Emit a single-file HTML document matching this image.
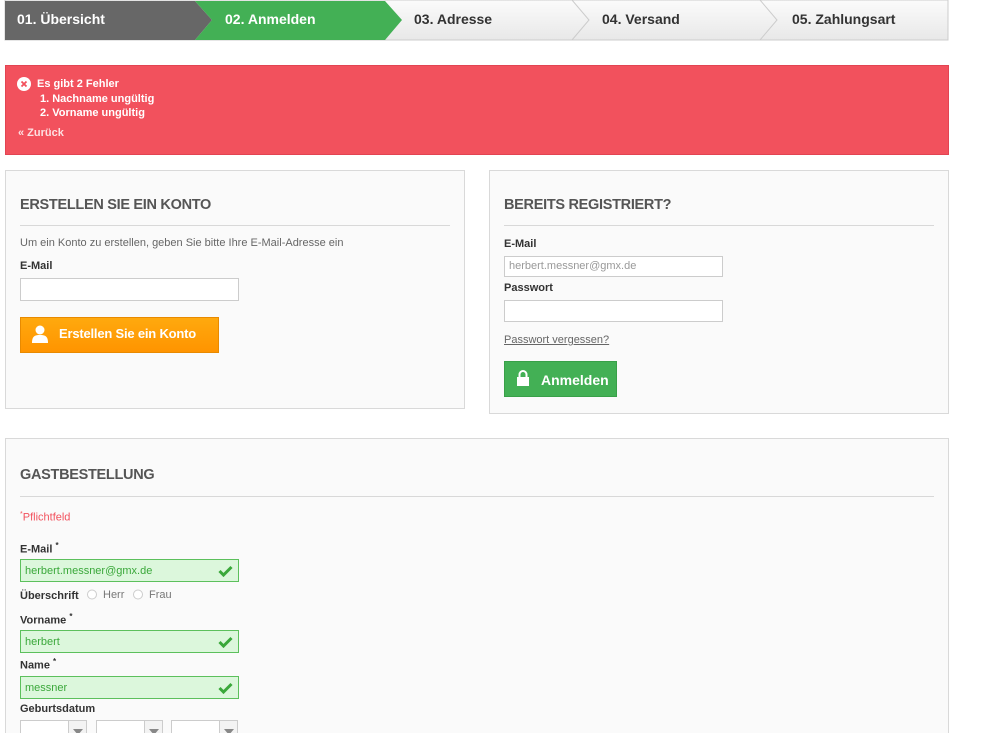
<!DOCTYPE html><html><head><meta charset="utf-8"><style>
*{box-sizing:border-box;margin:0;padding:0}
html,body{width:1000px;height:733px;overflow:hidden}
body{background:#fff;font-family:"Liberation Sans",Arial,sans-serif;font-size:12px;color:#333;position:relative}
.a{position:absolute}
.step{position:absolute;top:0;height:40px;font-weight:bold;font-size:14px;line-height:38px;padding-left:17px}
.box{position:absolute;background:#fafafa;border:1px solid #d9d9d9}
h3{position:absolute;font-size:14.5px;font-weight:bold;color:#555;letter-spacing:-.3px}
.hr{position:absolute;height:1px;background:#d8d8d8}
.lab{position:absolute;font-weight:bold;font-size:11px;color:#333}
.inp{position:absolute;height:23px;background:#fff;border:1px solid #ccc;font-size:11px;color:#999;padding:4px 4px;line-height:13px}
.ok{position:absolute;height:23px;width:219px;background:#dcf7dc;border:1px solid #5cc05c;font-size:11px;color:#3aa83a;padding:5px 4px;line-height:12px}
.ok svg{position:absolute;right:5px;top:5px}
.sel{position:absolute;top:720px;width:67px;height:20px;background:#fff;border:1px solid #ccc}
.sel i{position:absolute;right:0;top:0;width:18px;height:20px;border-left:1px solid #ccc;background:#f3f3f3}
.sel i:after{content:"";position:absolute;left:4px;top:8px;border:5px solid transparent;border-top:6px solid #888}
</style></head><body>
<svg class="a" style="left:0;top:0" width="1000" height="42">
<defs><linearGradient id="g" x1="0" y1="0" x2="0" y2="1"><stop offset="0" stop-color="#fbfbfb"/><stop offset="1" stop-color="#e8e8e8"/></linearGradient></defs>
<polygon points="5,0 948,0 948,40 5,40" fill="url(#g)" stroke="#ccc"/>
<polygon points="5,1 195,1 212,20 195,40 5,40" fill="#676767"/>
<polygon points="195,1 385,1 402,20 385,40 195,40 212,20" fill="#43b055"/>
<polyline points="572,0 589,20 572,40" fill="none" stroke="#ccc"/>
<polyline points="760,0 777,20 760,40" fill="none" stroke="#ccc"/>
</svg>
<div class="step" style="left:0;color:#fff">01. Übersicht</div>
<div class="step" style="left:208px;color:#fff">02. Anmelden</div>
<div class="step" style="left:397px;color:#333">03. Adresse</div>
<div class="step" style="left:585px;color:#333">04. Versand</div>
<div class="step" style="left:775px;color:#333">05. Zahlungsart</div>

<div class="a" style="left:5px;top:65px;width:944px;height:90px;background:#f2515d;border:1px solid #e24452"></div>
<svg class="a" style="left:17px;top:77px" width="14" height="14"><circle cx="7" cy="7" r="7" fill="#fff"/><path d="M4.5 4.5l5 5M9.5 4.5l-5 5" stroke="#f2515d" stroke-width="1.8"/></svg>
<div class="a" style="left:37px;top:77px;color:#fff;font-weight:bold;font-size:11px;line-height:14.5px">Es gibt 2 Fehler<br><span style="padding-left:3px">1. Nachname ungültig</span><br><span style="padding-left:3px">2. Vorname ungültig</span></div>
<div class="a" style="left:18px;top:127px;font-weight:bold;font-size:11px;color:#fde0e2">« Zurück</div>

<div class="box" style="left:5px;top:170px;width:460px;height:239px"></div>
<h3 style="left:20px;top:197px">ERSTELLEN SIE EIN KONTO</h3>
<div class="hr" style="left:20px;top:225px;width:430px"></div>
<div class="a" style="left:20px;top:237px;font-size:11px;color:#666">Um ein Konto zu erstellen, geben Sie bitte Ihre E-Mail-Adresse ein</div>
<div class="lab" style="left:20px;top:260px">E-Mail</div>
<div class="inp" style="left:20px;top:278px;width:219px"></div>
<div class="a" style="left:20px;top:317px;width:199px;height:36px;background:linear-gradient(#ffa90e,#ff9400);border:1px solid #e88a00"></div>
<svg class="a" style="left:31px;top:324px" width="18" height="20"><circle cx="9" cy="6" r="4.5" fill="#fff"/><path d="M1 19c0-7 3-8 8-8s8 1 8 8z" fill="#fff"/></svg>
<div class="a" style="left:59px;top:326px;color:#fff;font-weight:bold;font-size:13px;letter-spacing:-.2px">Erstellen Sie ein Konto</div>

<div class="box" style="left:489px;top:170px;width:460px;height:244px"></div>
<h3 style="left:504px;top:197px">BEREITS REGISTRIERT?</h3>
<div class="hr" style="left:504px;top:225px;width:430px"></div>
<div class="lab" style="left:504px;top:238px">E-Mail</div>
<div class="inp" style="left:504px;top:256px;width:219px;height:21px;padding:3px 4px">herbert.messner@gmx.de</div>
<div class="lab" style="left:504px;top:282px">Passwort</div>
<div class="inp" style="left:504px;top:300px;width:219px;height:22px"></div>
<div class="a" style="left:504px;top:334px;font-size:11px;color:#666;text-decoration:underline">Passwort vergessen?</div>
<div class="a" style="left:504px;top:361px;width:113px;height:36px;background:#43b055;border:1px solid #38a048"></div>
<svg class="a" style="left:516px;top:369px" width="14" height="18"><path d="M3.5 8V5.5a3.5 3.5 0 0 1 7 0V8" fill="none" stroke="#fff" stroke-width="2"/><rect x="1" y="8" width="12" height="9" fill="#fff"/></svg>
<div class="a" style="left:541px;top:372px;color:#fff;font-weight:bold;font-size:14px">Anmelden</div>

<div class="box" style="left:5px;top:438px;width:944px;height:310px"></div>
<h3 style="left:20px;top:467px">GASTBESTELLUNG</h3>
<div class="hr" style="left:20px;top:496px;width:914px"></div>
<div class="a" style="left:20px;top:511px;font-size:11px;color:#f2515d"><sup style="font-size:7px">*</sup>Pflichtfeld</div>
<div class="lab" style="left:20px;top:541px">E-Mail <sup style="font-size:8px">*</sup></div>
<div class="ok" style="left:20px;top:559px">herbert.messner@gmx.de<svg width="15" height="12"><path d="M1.5 6l4 4 8-8" fill="none" stroke="#3aa83a" stroke-width="3"/></svg></div>
<div class="lab" style="left:20px;top:590px">Überschrift</div>
<svg class="a" style="left:87px;top:589px" width="100" height="12"><circle cx="5" cy="5.5" r="4.5" fill="#fff" stroke="#ccc"/><circle cx="51" cy="5.5" r="4.5" fill="#fff" stroke="#ccc"/></svg>
<div class="a" style="left:103px;top:589px;font-size:11px;color:#777">Herr</div>
<div class="a" style="left:149px;top:589px;font-size:11px;color:#777">Frau</div>
<div class="lab" style="left:20px;top:612px">Vorname <sup style="font-size:8px">*</sup></div>
<div class="ok" style="left:20px;top:630px">herbert<svg width="15" height="12"><path d="M1.5 6l4 4 8-8" fill="none" stroke="#3aa83a" stroke-width="3"/></svg></div>
<div class="lab" style="left:20px;top:657px">Name <sup style="font-size:8px">*</sup></div>
<div class="ok" style="left:20px;top:676px">messner<svg width="15" height="12"><path d="M1.5 6l4 4 8-8" fill="none" stroke="#3aa83a" stroke-width="3"/></svg></div>
<div class="lab" style="left:20px;top:703px">Geburtsdatum</div>
<div class="sel" style="left:20px"><i></i></div>
<div class="sel" style="left:96px"><i></i></div>
<div class="sel" style="left:171px"><i></i></div>
</body></html>
